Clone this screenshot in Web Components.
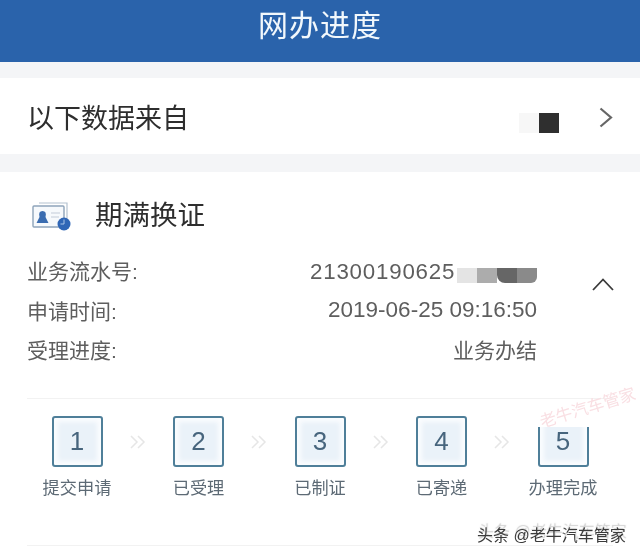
<!DOCTYPE html>
<html lang="zh">
<head>
<meta charset="utf-8">
<title>网办进度</title>
<style>
  html, body { margin: 0; padding: 0; background: #f4f5f7; }
  body {
    width: 640px;
    height: 554px;
    overflow: hidden;
    position: relative;
    font-family: "Liberation Sans", "Noto Sans CJK SC", sans-serif;
    filter: blur(0.45px);
  }
</style>
</head>
<body>
<app-header>网办进度</app-header>
<source-row>以下数据来自</source-row>
<renewal-card></renewal-card>
<water-marks></water-marks>

<script>
class AppHeader extends HTMLElement {
  constructor() {
    super();
    this.attachShadow({ mode: 'open' });
    this.shadowRoot.innerHTML = `
    <style>
      :host {
        display: flex;
        align-items: center;
        justify-content: center;
        height: 62px;
        padding-bottom: 16px;
        box-sizing: border-box;
        background: #2a63ab;
        color: #f2f8fc;
        font-size: 30px;
        letter-spacing: 1px;
      }
    </style>
    <slot></slot>`;
  }
}

class SourceRow extends HTMLElement {
  constructor() {
    super();
    this.attachShadow({ mode: 'open' });
    this.shadowRoot.innerHTML = `
    <style>
      :host {
        display: flex;
        align-items: center;
        height: 76px;
        margin: 16px 0 18px;
        padding: 0 27px;
        box-sizing: border-box;
        background: #fff;
        color: #2e2e2e;
        font-size: 27px;
      }
      .text { flex: 1; }
      .smudge { width: 20px; height: 20px; background: #f7f7f7; margin-top: 14px; }
      .square { width: 20px; height: 20px; background: #2f2f2f; margin-top: 14px; }
      svg { margin: 4px 0 0 40px; display: block; }
    </style>
    <span class="text"><slot></slot></span>
    <span class="smudge"></span>
    <span class="square"></span>
    <svg width="14" height="22" viewBox="0 0 14 22"><path d="M1.5 1.5 L12 10.5 L1.5 19.5" fill="none" stroke="#666" stroke-width="2.2"/></svg>`;
  }
}

class InfoRow extends HTMLElement {
  static get observedAttributes() { return ['label']; }
  constructor() {
    super();
    this.attachShadow({ mode: 'open' });
    this.shadowRoot.innerHTML = `
    <style>
      :host {
        display: flex;
        align-items: center;
        justify-content: space-between;
        height: 39.5px;
        color: #5e5e5e;
        font-size: 21px;
        white-space: nowrap;
      }
      .value { display: flex; align-items: center; }
    </style>
    <span id="label"></span>
    <span class="value"><slot></slot></span>`;
  }
  attributeChangedCallback(name, old, value) {
    this.shadowRoot.getElementById('label').textContent = value;
  }
}

class StepItem extends HTMLElement {
  constructor() {
    super();
    this.attachShadow({ mode: 'open' });
    this.shadowRoot.innerHTML = `
    <style>
      :host {
        display: flex;
        flex-direction: column;
        align-items: center;
        width: 90px;
        flex: none;
      }
      .box {
        width: 51px;
        height: 51px;
        box-sizing: border-box;
        border: 2px solid #4f7f99;
        border-radius: 3px;
        background: #eaf2f9;
        box-shadow: inset 0 0 4px 4px #fafcfe;
        display: flex;
        align-items: center;
        justify-content: center;
        color: #47657d;
        font-size: 26px;
      }
      .label {
        margin-top: 10px;
        height: 22px;
        line-height: 22px;
        color: #5d6a75;
        font-size: 17.2px;
        white-space: nowrap;
      }
    </style>
    <div class="box"></div>
    <div class="label"><slot></slot></div>`;
  }
  connectedCallback() {
    this.shadowRoot.querySelector('.box').textContent = this.getAttribute('num');
  }
}

class StepArrow extends HTMLElement {
  constructor() {
    super();
    this.attachShadow({ mode: 'open' });
    this.shadowRoot.innerHTML = `
    <style>
      :host {
        display: flex;
        justify-content: center;
        align-items: center;
        width: 31.5px;
        height: 51px;
        flex: none;
      }
      svg { display: block; }
    </style>
    <svg width="16" height="14" viewBox="0 0 16 14" fill="none" stroke="#e6e6e6" stroke-width="1.5">
      <path d="M1 1 L7 7 L1 13"/><path d="M8 1 L14 7 L8 13"/>
    </svg>`;
  }
}

class RenewalCard extends HTMLElement {
  constructor() {
    super();
    this.attachShadow({ mode: 'open' });
    this.shadowRoot.innerHTML = `
    <style>
      :host { display: block; background: #fff; padding-bottom: 20px; }
      .head {
        display: flex;
        align-items: center;
        gap: 24px;
        height: 78.5px;
        padding: 4px 0 0 32px;
        box-sizing: border-box;
        color: #2e2e2e;
        font-size: 27.5px;
      }
      .head svg { display: block; margin-top: 3px; }
      .info { display: flex; }
      .rows { width: 510px; margin-left: 27px; flex: none; }
      .up { margin: 27px 0 0 55px; display: block; }
      .date { font-size: 22.5px; }
      .mask { display: flex; margin-top: 10px; height: 15px; }
      .mask i { display: block; width: 20px; height: 100%; }
      .num { display: block; width: 147px; font-size: 22.3px; letter-spacing: .8px; margin-top: 3px; }
      .line { height: 1px; background: #f2f2f2; margin: 0 27px; }
      .line.top { margin-top: 29px; }
      .steps {
        display: flex;
        margin-left: 32px;
        padding-top: 17px;
        height: 146px;
        box-sizing: border-box;
      }
    </style>
    <div class="head">
      <svg width="39" height="32" viewBox="0 0 39 32">
        <path d="M7 4 H35 V22" fill="none" stroke="#b4c2d0" stroke-width="1.2"/>
        <rect x="1" y="7" width="31" height="21" rx="1" fill="#f6f9fc" stroke="#8ea4ba" stroke-width="1.4"/>
        <path d="M4.5 24 L7.5 18 Q6 12 10.5 12 Q15 12 13.5 18 L16.5 24 Z" fill="#3a6cb0"/>
        <path d="M19 14 H28 M19 18 H27" stroke="#c2ccd8" stroke-width="1.2"/>
        <circle cx="32" cy="25" r="6.5" fill="#2f66b6"/>
        <path d="M32 20.5 V25 H28.5" fill="none" stroke="#a9c4e8" stroke-width="1"/>
      </svg>
      <span>期满换证</span>
    </div>
    <div class="info">
      <div class="rows">
        <info-row label="业务流水号:"><span class="num">21300190625</span><span class="mask"><i style="background:#e4e4e4"></i><i style="background:#acacac"></i><i style="background:#666;border-radius:0 0 0 8px"></i><i style="background:#8a8a8a;border-radius:0 0 6px 0"></i></span></info-row>
        <info-row label="申请时间:"><span class="date">2019-06-25 09:16:50</span></info-row>
        <info-row label="受理进度:">业务办结</info-row>
      </div>
      <svg class="up" width="22" height="13" viewBox="0 0 22 13"><path d="M1 12 L11 1.5 L21 12" fill="none" stroke="#3a3a3a" stroke-width="1.8"/></svg>
    </div>
    <div class="line top"></div>
    <div class="steps">
      <step-item num="1">提交申请</step-item>
      <step-arrow></step-arrow>
      <step-item num="2">已受理</step-item>
      <step-arrow></step-arrow>
      <step-item num="3">已制证</step-item>
      <step-arrow></step-arrow>
      <step-item num="4">已寄递</step-item>
      <step-arrow></step-arrow>
      <step-item num="5">办理完成</step-item>
    </div>
    <div class="line"></div>`;
  }
}

// watermarks lie over the page, hence absolute
class WaterMarks extends HTMLElement {
  constructor() {
    super();
    this.attachShadow({ mode: 'open' });
    this.shadowRoot.innerHTML = `
    <style>
      :host { display: block; position: absolute; inset: 0; pointer-events: none; }
      .patch { position: absolute; left: 528px; top: 404px; width: 70px; height: 22.5px; background: #fff; }
      .pink {
        position: absolute;
        left: 540px;
        top: 409px;
        color: #f9dfe3;
        font-size: 16.5px;
        transform: rotate(-17deg);
        transform-origin: 0 50%;
        white-space: nowrap;
      }
      .brand {
        position: absolute;
        left: 477px;
        top: 522px;
        color: #3b3b3b;
        font-size: 16px;
        white-space: nowrap;
        text-shadow: 1px -4px 1px rgba(170,170,170,.55);
      }
    </style>
    <div class="patch"></div>
    <div class="pink">老牛汽车管家</div>
    <div class="brand">头条 @老牛汽车管家</div>`;
  }
}

customElements.define('app-header', AppHeader);
customElements.define('source-row', SourceRow);
customElements.define('info-row', InfoRow);
customElements.define('step-item', StepItem);
customElements.define('step-arrow', StepArrow);
customElements.define('renewal-card', RenewalCard);
customElements.define('water-marks', WaterMarks);
</script>
</body>
</html>
